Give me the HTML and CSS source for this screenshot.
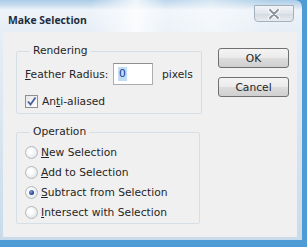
FILE: index.html
```html
<!DOCTYPE html>
<html lang="en">
<head>
    <meta charset="UTF-8">
    <meta name="viewport" content="width=device-width, initial-scale=1.0">
    <title>Make Selection</title>
    <link rel="stylesheet" href="styles.css">
</head>
<body>
    <div class="window">
        <div class="titlebar">
            <span class="title">Make Selection</span>
            <button class="close">
                <svg width="14" height="10" viewBox="0 0 14 10">
                    <path d="M3 1 L11 9 M11 1 L3 9" stroke="#fff" stroke-width="4" stroke-linecap="round"/>
                    <path d="M3 1 L11 9 M11 1 L3 9" stroke="#8c939b" stroke-width="2" stroke-linecap="round"/>
                </svg>
            </button>
        </div>
        <div class="client">
            <div class="groups">
                <fieldset class="group rendering">
                    <legend>Rendering</legend>
                    <div class="row">
                        <label class="label"><u>F</u>eather Radius:</label>
                        <div class="textbox"><span class="sel">0</span></div>
                        <span class="unit">pixels</span>
                    </div>
                    <div class="row check-row">
                        <span class="checkbox">
                            <svg width="11" height="11" viewBox="0 0 11 11">
                                <path d="M2 5.5 L4.5 8.5 L9.5 1.5" fill="none" stroke="#4b5f98" stroke-width="1.8"/>
                            </svg>
                        </span>
                        <span>An<u>t</u>i-aliased</span>
                    </div>
                </fieldset>
                <fieldset class="group operation">
                    <legend>Operation</legend>
                    <div class="option"><span class="radio"></span><span><u>N</u>ew Selection</span></div>
                    <div class="option"><span class="radio"></span><span><u>A</u>dd to Selection</span></div>
                    <div class="option"><span class="radio checked"></span><span><u>S</u>ubtract from Selection</span></div>
                    <div class="option"><span class="radio"></span><span><u>I</u>ntersect with Selection</span></div>
                </fieldset>
            </div>
            <div class="buttons">
                <button class="btn">OK</button>
                <button class="btn">Cancel</button>
            </div>
        </div>
    </div>
</body>
</html>
```

FILE: styles.css
```css
body {
    margin: 0;
    background-color: #4f9bd6;
    font-family: "DejaVu Sans", sans-serif;
    font-size: 10.7px;
    color: #262626;
}
.window {
    width: 302px;
    height: 240px;
    border-top-right-radius: 7px;
    background: linear-gradient(to bottom, #a9cce8 0, #cfe0ef 6px, #eef3f9 10px, #e6eef6 32px, #c9dbea 100%);
    display: flex;
    flex-direction: column;
}
.titlebar {
    height: 32px;
    display: flex;
    justify-content: space-between;
    align-items: flex-start;
    background: linear-gradient(to right, rgba(255,255,255,0) 30%, rgba(255,255,255,0.8) 45%, rgba(255,255,255,0.2) 55%, rgba(255,255,255,0.5) 70%, rgba(255,255,255,0) 90%);
}
.title {
    font-family: "Open Sans", sans-serif;
    font-weight: bold;
    font-size: 10.4px;
    color: #1f2d3d;
    margin: 13px 0 0 8px;
}
.close {
    width: 40px;
    height: 17px;
    margin: 5px 8px 0 0;
    padding: 0;
    border: 1px solid #a4b0bc;
    border-radius: 0 0 4px 4px;
    background: linear-gradient(to bottom, #f2f5f8, #dfe5eb 50%, #d3dae1 51%, #e8ecf0);
    display: flex;
    justify-content: center;
    align-items: center;
}
.client {
    flex: 1;
    margin: 0 5px 3px 3px;
    background-color: #f0f0f0;
    display: flex;
    padding: 12px 0 0 13px;
}
.groups {
    width: 184px;
    display: flex;
    flex-direction: column;
    gap: 11px;
}
.group {
    margin: 0;
    border: 1px solid #d5dfe5;
    border-radius: 2px;
    padding: 0 8px;
}
.group legend {
    margin-left: 5px;
    padding: 0 3px;
    line-height: 14px;
}
.rendering {
    padding-top: 5px;
    padding-bottom: 5px;
}
.row {
    display: flex;
    align-items: center;
    height: 22px;
}
.label {
    width: 88px;
}
.textbox {
    width: 40px;
    height: 22px;
    border: 1px solid #abadb3;
    border-top-color: #8e9094;
    background-color: #fff;
    display: flex;
    align-items: center;
    padding-left: 4px;
    box-sizing: border-box;
}
.sel {
    background-color: #c3dcf5;
    color: #0f3c8c;
    padding: 0 1px;
    line-height: 14px;
}
.unit {
    margin-left: 9px;
}
.check-row {
    height: 13px;
    margin-top: 10px;
    gap: 4px;
}
.checkbox {
    width: 11px;
    height: 11px;
    border: 1px solid #8f8f8f;
    background: linear-gradient(135deg, #e6e6e6, #ffffff);
    display: flex;
    align-items: center;
    justify-content: center;
}
.operation {
    padding-top: 3px;
    padding-bottom: 1px;
}
.option {
    display: flex;
    align-items: center;
    gap: 3px;
    height: 20px;
}
.radio {
    width: 11px;
    height: 11px;
    border: 1px solid #b4bac0;
    border-radius: 50%;
    background: radial-gradient(circle at 40% 40%, #ffffff 20%, #dcdfe3 90%);
    display: flex;
    align-items: center;
    justify-content: center;
}
.radio.checked::after {
    content: "";
    width: 5px;
    height: 5px;
    border-radius: 50%;
    background: radial-gradient(circle at 35% 35%, #7fa0e0, #1b3a8f 70%);
}
.buttons {
    display: flex;
    flex-direction: column;
    gap: 9px;
    margin: 4px 0 0 18px;
}
.btn {
    width: 71px;
    height: 20px;
    padding: 0;
    font-family: "DejaVu Sans", sans-serif;
    font-size: 10.7px;
    color: #262626;
    border: 1px solid #707070;
    border-radius: 3px;
    background: linear-gradient(to bottom, #f4f4f4, #ebebeb 48%, #dddddd 50%, #cfcfcf);
}
```
